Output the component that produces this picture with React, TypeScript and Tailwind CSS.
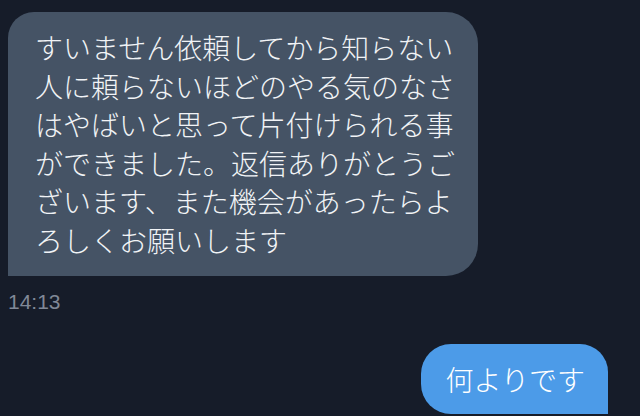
const JP = "font-['Noto_Sans_CJK_JP','Noto_Sans',sans-serif] font-light";

const received = [
  "すいません依頼してから知らない",
  "人に頼らないほどのやる気のなさ",
  "はやばいと思って片付けられる事",
  "ができました。返信ありがとうご",
  "ざいます、また機会があったらよ",
  "ろしくお願いします",
];

export default function App() {
  return (
    <div className="w-[640px] h-[416px] overflow-hidden bg-[#161c29] flex flex-col px-[8px] pt-[12px]">
      {/* 受信メッセージ */}
      <div
        className={`${JP} self-start w-[470px] bg-[#455365] text-[#f1f3f6] text-[28px] leading-[38.6px] pl-[27px] pr-[20px] pt-[16px] pb-[16px] rounded-tl-[26px] rounded-tr-[32px] rounded-br-[32px] rounded-bl-none whitespace-nowrap`}
      >
        {received.map((line) => (
          <div key={line}>{line}</div>
        ))}
      </div>
      <div className="mt-[14px] text-[21px] leading-[24px] text-[#808897] font-['Liberation_Sans',sans-serif]">
        14:13
      </div>

      {/* 送信メッセージ */}
      <div
        className={`${JP} self-end mr-[24px] mt-[30px] bg-[#4c9be8] text-white text-[28px] leading-[38.6px] pl-[25px] pr-[23px] pt-[16px] pb-[16px] rounded-tl-[30px] rounded-tr-[28px] rounded-bl-[30px] rounded-br-none whitespace-nowrap`}
      >
        何よりです
      </div>
    </div>
  );
}
